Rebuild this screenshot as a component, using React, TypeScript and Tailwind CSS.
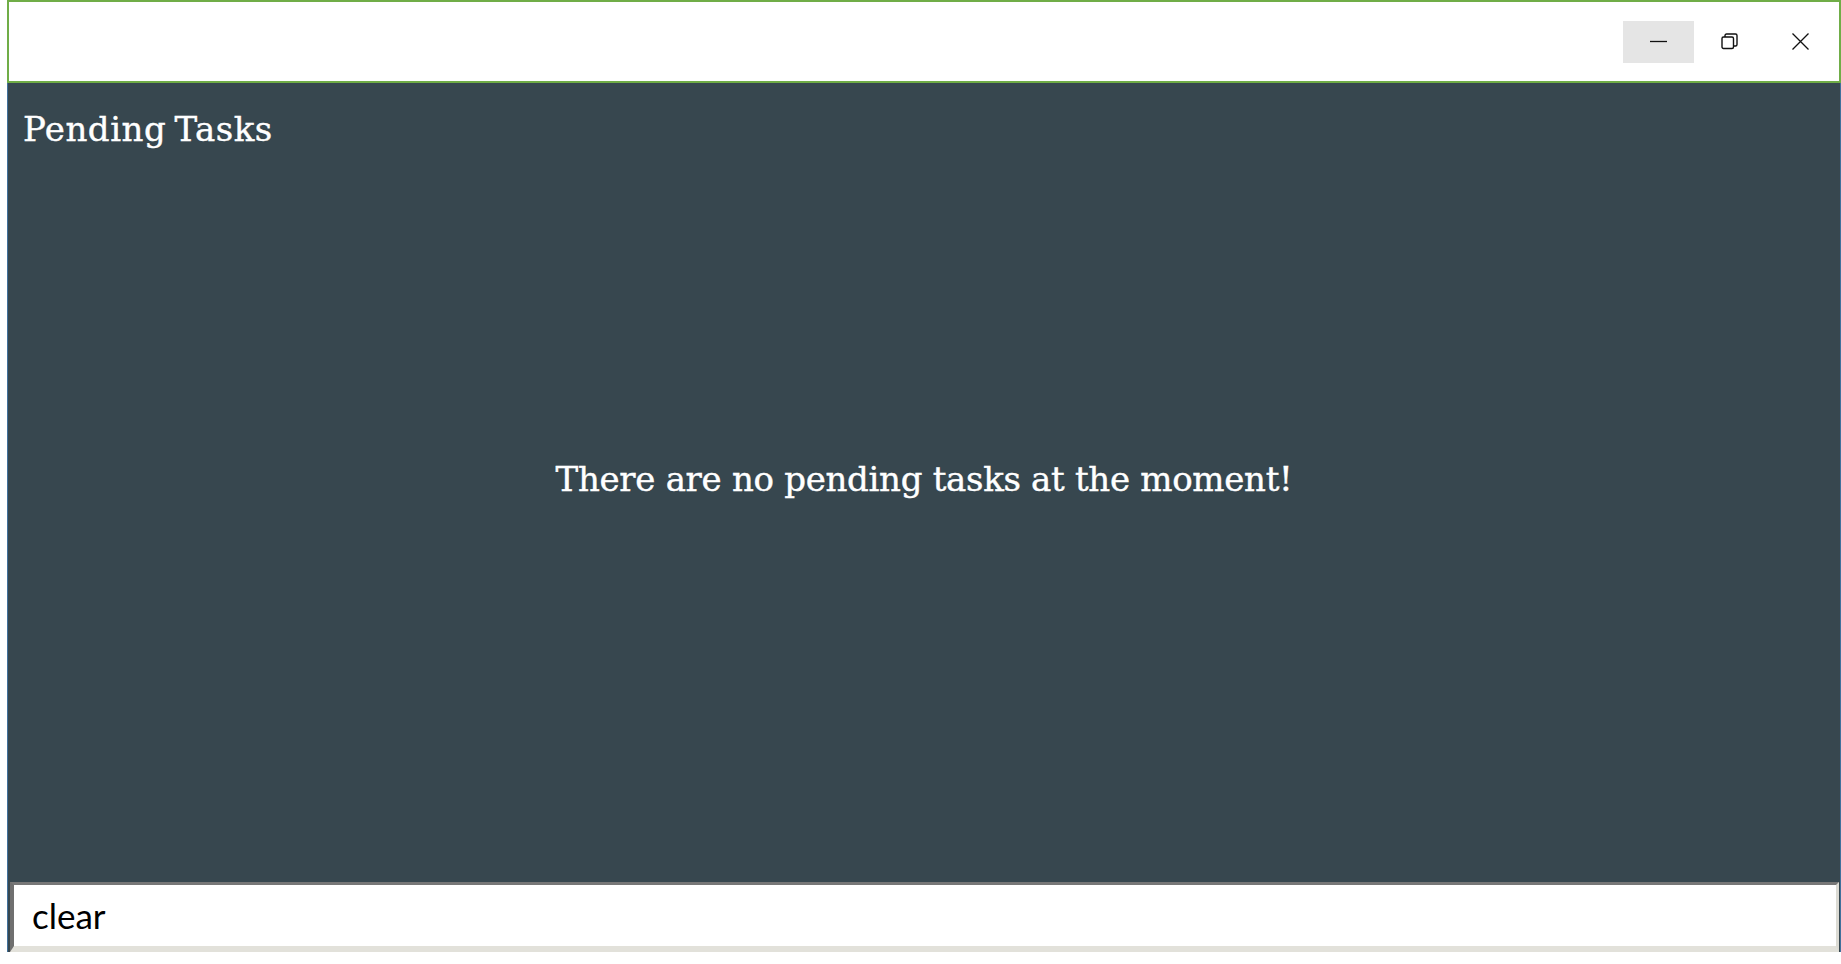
import React from "react";

function MinimizeIcon() {
  return (
    <svg width="17" height="17" viewBox="0 0 17 17" fill="none">
      <path d="M0 8.5H17" stroke="#111" strokeWidth="1.3" />
    </svg>
  );
}

function RestoreIcon() {
  return (
    <svg width="17" height="17" viewBox="0 0 17 17" fill="none">
      <rect x="1" y="4" width="11.5" height="11.5" rx="1.5" stroke="#111" strokeWidth="1.4" />
      <path d="M4 4V2.5C4 1.7 4.7 1 5.5 1H14.5C15.3 1 16 1.7 16 2.5V11.5C16 12.3 15.3 13 14.5 13H12.5" stroke="#111" strokeWidth="1.4" />
    </svg>
  );
}

function CloseIcon() {
  return (
    <svg width="17" height="17" viewBox="0 0 17 17" fill="none">
      <path d="M0.5 0.5L16.5 16.5M16.5 0.5L0.5 16.5" stroke="#111" strokeWidth="1.3" />
    </svg>
  );
}

export default function App() {
  const slab = { fontFamily: '"DejaVu Serif", "Liberation Serif", serif' };

  return (
    <div className="h-[964px] w-full bg-white pl-[7px] overflow-hidden">
      <div className="flex h-[952px] w-[1834px] flex-col">
        {/* title bar */}
        <div className="flex h-[83px] shrink-0 items-center justify-end border-2 border-[#70ad47] bg-white pr-[3px]">
          <button className="flex h-[42px] w-[71px] items-center justify-center bg-[#e5e5e5]">
            <MinimizeIcon />
          </button>
          <button className="flex h-[42px] w-[71px] items-center justify-center">
            <RestoreIcon />
          </button>
          <button className="flex h-[42px] w-[71px] items-center justify-center">
            <CloseIcon />
          </button>
        </div>

        {/* content */}
        <div className="flex flex-1 flex-col border-x border-[#41719c] bg-[#37474f]">
          <h1
            className="pl-[15px] pt-[26px] text-[34px] leading-[40px] tracking-[0.5px] [word-spacing:-3px] text-white [-webkit-text-stroke:0.4px_white]"
            style={slab}
          >
            Pending Tasks
          </h1>
          <div className="flex flex-1 items-center justify-center pb-[74px]">
            <p
              className="text-[34px] leading-[40px] tracking-[-0.3px] text-white [-webkit-text-stroke:0.4px_white]"
              style={slab}
            >
              There are no pending tasks at the moment!
            </p>
          </div>
          <div className="ml-[2px] mr-[1px] flex h-[70px] items-center border-b-[6px] border-l-[4px] border-r-[3px] border-t-[3px] border-b-[#e2e1da] border-l-[#6f6f6f] border-r-[#dcdbd4] border-t-[#777] bg-white pl-[18px]">
            <span
              className="text-[35px] leading-none text-black"
              style={{ fontFamily: 'Lato, "Open Sans", sans-serif' }}
            >
              clear
            </span>
          </div>
        </div>
      </div>
    </div>
  );
}
